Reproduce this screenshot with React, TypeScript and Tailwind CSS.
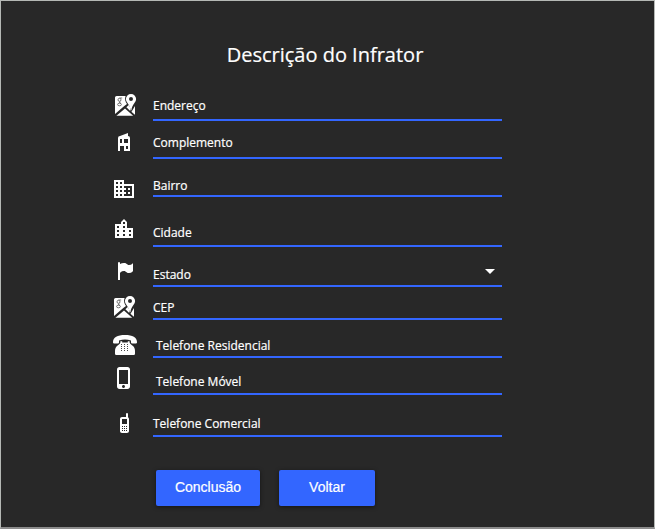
import type { ReactNode } from "react";

function Icon({ children }: { children: ReactNode }) {
  return (
    <svg width="24" height="24" viewBox="0 0 24 24" fill="#fff" className="block shrink-0">
      {children}
    </svg>
  );
}

function MapIcon() {
  return (
    <Icon>
      <path d="M3.6 3H12.6C11.4 6 12.3 8.8 14 11L11.3 13L2 21V4.6Q2 3 3.6 3Z" />
      <path d="M3.4 22.8L12 15.6L20.2 22.8Z" />
      <path d="M13.4 14.2L15.6 12L17.2 14.2V18Z" />
      <path d="M19 18L22 13V21.2Q22 21.8 21.6 21.6L18.4 18.8Z" />
      <path
        fillRule="evenodd"
        d="M18 1A5.1 5.1 0 0 0 12.9 6.1C12.9 9.6 17 11.6 17.6 17.2H18.4C19 11.6 23.1 9.6 23.1 6.1A5.1 5.1 0 0 0 18 1ZM18 4A2 2 0 1 1 18 8A2 2 0 1 1 18 4Z"
      />
      <g fill="none" stroke="#555" strokeWidth="0.8">
        <circle cx="6.5" cy="6.8" r="1.5" />
        <path d="M9.2 5H6.5M7.4 8.2L6.2 9.3L8 10.4" />
        <ellipse cx="6.5" cy="11.5" rx="1.9" ry="1.3" />
      </g>
    </Icon>
  );
}

function HouseIcon() {
  return (
    <Icon>
      <path d="M6 21V8A2 2 0 0 1 8 6L16 3V6A2 2 0 0 1 18 8V21H12V16H8V21H6M14 19H16V16H14V19M8 13H10V9H8V13M12 13H16V9H12V13Z" />
    </Icon>
  );
}

function DomainIcon() {
  return (
    <Icon>
      <path d="M12 7V3H2v18h20V7H12zM6 19H4v-2h2v2zm0-4H4v-2h2v2zm0-4H4V9h2v2zm0-4H4V5h2v2zm4 12H8v-2h2v2zm0-4H8v-2h2v2zm0-4H8V9h2v2zm0-4H8V5h2v2zm10 12h-8v-2h2v-2h-2v-2h2v-2h-2V9h8v10zm-2-8h-2v2h2v-2zm0 4h-2v2h2v-2z" />
    </Icon>
  );
}

function CityIcon() {
  return (
    <Icon>
      <path d="M15 11V5l-3-3-3 3v2H3v14h18V11h-6zm-8 8H5v-2h2v2zm0-4H5v-2h2v2zm0-4H5V9h2v2zm6 8h-2v-2h2v2zm0-4h-2v-2h2v2zm0-4h-2V9h2v2zm0-4h-2V5h2v2zm6 12h-2v-2h2v2zm0-4h-2v-2h2v2z" />
    </Icon>
  );
}

function FlagIcon() {
  return (
    <Icon>
      <path d="M6 3A1 1 0 0 1 7 4V4.88C8.06 4.44 9.5 4 11 4C14 4 14 6 16 6C19 6 20 4 20 4V12C20 12 19 14 16 14C13 14 13 12 11 12C8 12 7 14 7 14V21H5V4A1 1 0 0 1 6 3Z" />
    </Icon>
  );
}

function DeskPhoneIcon() {
  return (
    <Icon>
      <path d="M0 9C0 4.4 4.4 2 12 2S24 4.4 24 9V9.6Q24 10.4 23.2 10.4H18.8Q18 10.4 18 9.6V7.4Q12 5.4 6 7.4V9.6Q6 10.4 5.2 10.4H.8Q0 10.4 0 9.6Z" />
      <path d="M7.4 8.2H9.2V9.4H14.8V8.2H16.6V9.6C17.4 11.4 18.6 12 20 13C21.4 14 22 16 22 18V20.8Q22 22 20.8 22H3.2Q2 22 2 20.8V18C2 16 2.6 14 4 13C5.4 12 6.6 11.4 7.4 9.6Z" />
      <path
        stroke="#484848"
        strokeWidth="1"
        fill="none"
        strokeDasharray="1 2"
        d="M8 11.5H15M8 13.5H15M8 15.5H15M8 17.5H15"
      />
    </Icon>
  );
}

function SmartphoneIcon() {
  return (
    <Icon>
      <path d="M15.5 1h-8C6.12 1 5 2.12 5 3.5v17C5 21.88 6.12 23 7.5 23h8c1.38 0 2.5-1.12 2.5-2.5v-17C18 2.12 16.88 1 15.5 1zm-4 21c-.83 0-1.5-.67-1.5-1.5s.67-1.5 1.5-1.5 1.5.67 1.5 1.5-.67 1.5-1.5 1.5zm4.5-4H7V4h9v14z" />
    </Icon>
  );
}

function CellphoneIcon() {
  return (
    <Icon>
      <path d="M15 2A1 1 0 0 0 14 3V6H10C8.89 6 8 6.89 8 8V20C8 21.11 8.89 22 10 22H15C16.11 22 17 21.11 17 20V8C17 7.26 16.6 6.62 16 6.28V3A1 1 0 0 0 15 2M10 8H15V13H10V8M10 15H11V16H10V15M12 15H13V16H12V15M14 15H15V16H14V15M10 17H11V18H10V17M12 17H13V18H12V17M14 17H15V18H14V17M10 19H11V20H10V19M12 19H13V20H12V19M14 19H15V20H14V19Z" />
    </Icon>
  );
}

const fields = [
  { label: "Endereço", icon: <MapIcon />, row: "h-[34px]", place: "pt-[6px] pl-px", text: "pb-[5px]" },
  { label: "Complemento", icon: <HouseIcon />, row: "h-[38px]", place: "pt-[9px]", text: "pb-[6px]" },
  { label: "Bairro", icon: <DomainIcon />, row: "h-[38px]", place: "pt-[18px]", text: "pb-px" },
  { label: "Cidade", icon: <CityIcon />, row: "h-[50px]", place: "pt-[20px]", text: "pb-[4px]" },
  { label: "Estado", icon: <FlagIcon />, row: "h-[40px]", place: "pt-[12px] pl-px", text: "pb-[2px]", select: true },
  { label: "CEP", icon: <MapIcon />, row: "h-[33px]", place: "pt-[8px]", text: "pb-[2px]" },
  { label: "Telefone Residencial", icon: <DeskPhoneIcon />, row: "h-[38px]", place: "pt-[13px] pl-px", text: "pb-[2px] pl-[3px]" },
  { label: "Telefone Móvel", icon: <SmartphoneIcon />, row: "h-[37px]", place: "pt-[8px]", text: "pb-[3px] pl-[3px]" },
  { label: "Telefone Comercial", icon: <CellphoneIcon />, row: "h-[42px]", place: "pt-[16px]", text: "pb-[3px]" },
];

export default function App() {
  return (
    <main className="flex h-[529px] w-[655px] flex-col border border-b-2 border-[#b5b8b5] border-b-[#8c8c8c] bg-[#282828] font-['Open_Sans','Noto_Sans',sans-serif] text-white">
      <h1 className="h-[86px] pt-[40px] pr-[5px] text-center text-[20px] leading-[28px] [-webkit-text-stroke:0.2px_#fff]">Descrição do Infrator</h1>
      <div className="ml-[111px] flex w-[390px] flex-col">
        {fields.map((f) => (
          <div key={f.label} className={`flex ${f.row}`}>
            <div className={`w-[41px] shrink-0 ${f.place}`}>{f.icon}</div>
            <div className="flex w-[349px] items-end justify-between border-b-2 border-[#3366ff]">
              <span className={`text-[12px] leading-[16px] [-webkit-text-stroke:0.2px_#fff] ${f.text}`}>{f.label}</span>
              {f.select && (
                <svg width="24" height="24" viewBox="0 0 24 24" fill="#fff" className="mb-[2px]">
                  <path d="M7 10l5 5 5-5z" />
                </svg>
              )}
            </div>
          </div>
        ))}
      </div>
      <div className="mt-[33px] ml-[155px] flex gap-[19px] font-['Liberation_Sans',Arial,sans-serif] text-[14px] [-webkit-text-stroke:0.2px_#fff]">
        <button className="h-[36px] w-[104px] rounded-[2px] bg-[#3366ff] pb-[2px] shadow-[0_1px_4px_rgba(0,0,0,0.5)]">Conclusão</button>
        <button className="h-[36px] w-[96px] rounded-[2px] bg-[#3366ff] pb-[2px] shadow-[0_1px_4px_rgba(0,0,0,0.5)]">Voltar</button>
      </div>
    </main>
  );
}
